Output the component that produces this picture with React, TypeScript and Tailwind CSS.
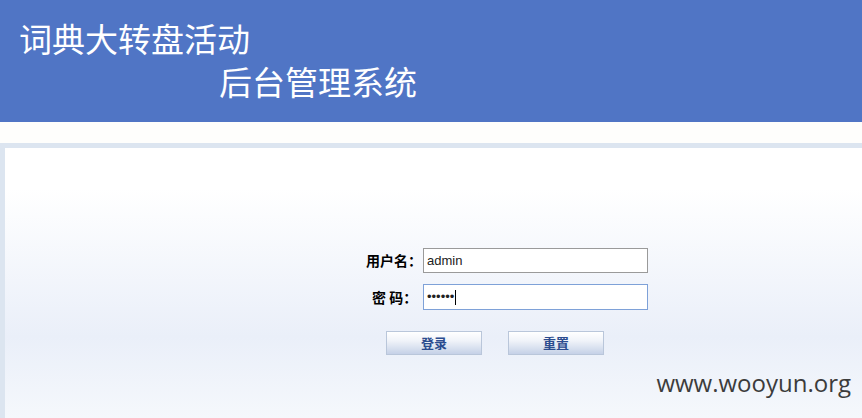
export default function App() {
  return (
    <div className="h-[418px] w-[862px] overflow-hidden bg-white font-['Liberation_Sans','Noto_Sans_CJK_SC',sans-serif]">
      {/* header */}
      <div className="h-[122px] bg-[#5075c5] pl-[19px] pt-[17px] text-white">
        <div className="text-[33px] leading-[42px] font-['Noto_Sans_CJK_SC',sans-serif]">词典大转盘活动</div>
        <div className="pl-[200px] pt-[1px] text-[33px] leading-[42px] font-['Noto_Sans_CJK_SC',sans-serif]">后台管理系统</div>
      </div>
      <div className="h-[21px] bg-[#fefefc]" />
      {/* content frame */}
      <div className="h-[275px] border-l-[5px] border-t-[5px] border-[#dce5f0]">
        <div className="flex h-full flex-col bg-[linear-gradient(to_bottom,#ffffff_0%,#ffffff_15%,#eaeff9_70%,#f5f8fc_100%)] pl-[361px] pt-[100px]">
          <div className="flex flex-col gap-[11px]">
            <div className="flex items-center">
              <span className="w-[57px] text-left text-[14px] font-bold text-black font-['Noto_Sans_CJK_SC',sans-serif]">用户名：</span>
              <input
                defaultValue="admin"
                className="h-[25px] w-[225px] border border-[#9a9a9a] bg-white px-[3px] text-[13px] text-[#222] outline-none"
              />
            </div>
            <div className="flex items-center">
              <span className="w-[57px] pl-[6px] text-left text-[14px] font-bold text-black font-['Noto_Sans_CJK_SC',sans-serif]">密&nbsp;码：</span>
              <div className="flex h-[26px] w-[225px] items-center border border-[#7ea1d8] bg-white px-[3px] text-[13px] text-[#222]">
                <span className="tracking-[0px]">••••••</span>
                <span className="ml-[1px] h-[15px] w-[1px] bg-black" />
              </div>
            </div>
          </div>
          <div className="ml-[20px] mt-[21px] flex gap-[26px]">
            <button className="h-[24px] w-[96px] border border-[#b9c6da] bg-[linear-gradient(to_bottom,#ffffff,#f0f3f9_40%,#c5d1e7)] text-[13px] font-bold text-[#2b4c8f] font-['Noto_Sans_CJK_SC',sans-serif]">登录</button>
            <button className="h-[24px] w-[96px] border border-[#b9c6da] bg-[linear-gradient(to_bottom,#ffffff,#f0f3f9_40%,#c5d1e7)] text-[13px] font-bold text-[#2b4c8f] font-['Noto_Sans_CJK_SC',sans-serif]">重置</button>
          </div>
          <div className="mt-[10px] self-end pr-[11px] text-[24px] text-[#3c3c3c] font-['Open_Sans',sans-serif]">www.wooyun.org</div>
        </div>
      </div>
    </div>
  );
}
